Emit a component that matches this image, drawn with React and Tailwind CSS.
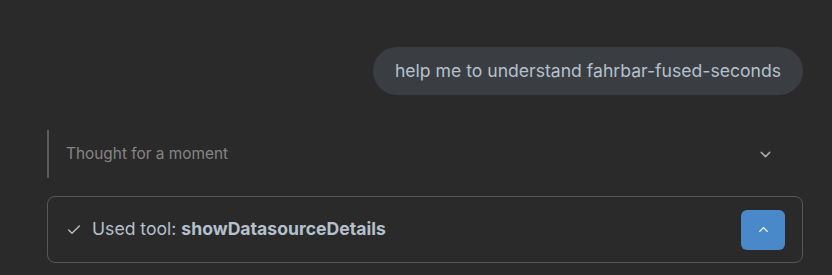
import React from 'react';

function ChevronDown({ className }) {
  return (
    <svg viewBox="0 0 24 24" fill="none" stroke="currentColor" strokeWidth="2" strokeLinecap="round" strokeLinejoin="round" className={className}>
      <path d="m6 9 6 6 6-6" />
    </svg>
  );
}

function ChevronUp({ className }) {
  return (
    <svg viewBox="0 0 24 24" fill="none" stroke="currentColor" strokeWidth="2" strokeLinecap="round" strokeLinejoin="round" className={className}>
      <path d="m18 15-6-6-6 6" />
    </svg>
  );
}

function Check({ className }) {
  return (
    <svg viewBox="0 0 24 24" fill="none" stroke="currentColor" strokeWidth="2" strokeLinecap="round" strokeLinejoin="round" className={className}>
      <path d="M20 6 9 17l-5-5" />
    </svg>
  );
}

export default function App() {
  return (
    <div
      className="min-h-[275px] w-full bg-[#2a2a2a] pl-[47px] pr-[29px] pt-[47px]"
      style={{ fontFamily: 'Inter, "Noto Sans", sans-serif' }}
    >
      {/* user message */}
      <div className="flex justify-end">
        <div className="h-12 flex items-center rounded-full bg-[#3a3e42] px-[22px] text-[17.6px] text-[#b5c0cc]">
          help me to understand fahrbar-fused-seconds
        </div>
      </div>

      {/* thinking */}
      <div className="mt-[35px] flex h-12 items-center border-l-2 border-[#5a5a5a] pl-[17px] pr-[29px]">
        <span className="text-[15.4px] text-[#858585]">Thought for a moment</span>
        <ChevronDown className="ml-auto h-[17px] w-[17px] text-[#a3adb8]" />
      </div>

      {/* tool card */}
      <div className="mt-[18px] flex h-[67px] items-center rounded-lg border border-[#575757] pl-[18px] pr-[17px]">
        <Check className="h-[16px] w-[16px] text-[#b5c0cc]" />
        <span className="ml-[10px] text-[17.6px] text-[#b5c0cc]">
          Used tool: <span className="font-bold">showDatasourceDetails</span>
        </span>
        <button className="ml-auto flex h-10 w-11 items-center justify-center rounded-md bg-[#4a89c9] text-white">
          <ChevronUp className="h-[15px] w-[15px]" />
        </button>
      </div>
    </div>
  );
}
